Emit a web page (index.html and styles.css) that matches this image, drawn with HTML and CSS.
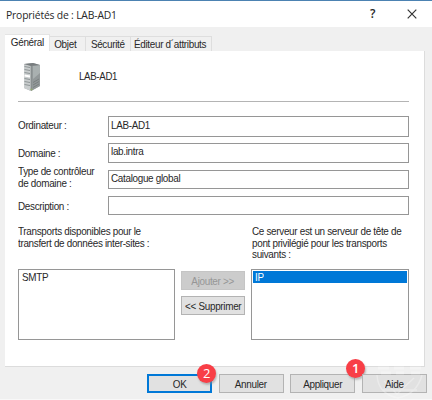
FILE: index.html
```html
<!DOCTYPE html>
<html lang="fr">
<head>
<meta charset="utf-8">
<title>Propriétés de : LAB-AD1</title>
<link rel="stylesheet" href="styles.css">
</head>
<body>
<main class="dialog">
  <header class="titlebar">
    <h1 class="title"><span class="t">Propriétés de : LAB-AD1</span></h1>
    <span class="help">?</span>
    <svg class="close" width="10" height="10" viewBox="0 0 10 10"><path d="M.7.7 9.3 9.3M9.3.7.7 9.3" stroke="#333" stroke-width="1.2" fill="none"/></svg>
  </header>
  <nav class="tabs">
    <span class="tab active t-general"><span class="t">Général</span></span>
    <span class="tab t-objet"><span class="t">Objet</span></span>
    <span class="tab t-secu"><span class="t">Sécurité</span></span>
    <span class="tab t-edit"><span class="t">Éditeur d´attributs</span></span>
  </nav>
  <section class="panel">
    <div class="identity">
      <svg class="server" width="18" height="29" viewBox="0 0 18 29">
        <path d="M1 1 10 0 17 2V23L8 28 1 25Z" fill="#a9adae"/>
        <path d="M8 3 17 2V23L8 28Z" fill="#929899"/>
        <path d="M10 3 17 2V10L10 16Z" fill="#a9b0b0"/>
        <path d="M1 1 8 3V28L1 25Z" fill="#c9cdce"/>
        <path d="M1 1 10 0 17 2 8 3Z" fill="#777c7e"/>
        <path d="M1.500 3.500 7 4.500M1.500 6.500 7 7.500M1.500 9.500 7 10.500M1.500 15.500 7 16.500M1.500 18.500 7 19.500M1.500 21.500 7 22.500" stroke="#7f8788" stroke-width=".8"/>
        <path d="M1.500 12.500 7 13.500" stroke="#fff" stroke-width="2"/>
        <path d="M8 3V27" stroke="#777d7e" stroke-width=".6"/>
        <path d="M10 19.500 16 16M10 22 16 18.500M10 24.500 16 21" stroke="#737a7a" stroke-width=".8"/>
        <circle cx="8.500" cy="26.500" r="1" fill="#91a96d"/>
      </svg>
      <span class="name"><span class="t caps">LAB-AD1</span></span>
    </div>
    <div class="fields">
      <label class="l1"><span class="t">Ordinateur :</span></label><div class="field f1"><span class="t">LAB-AD1</span></div>
      <label class="l2"><span class="t">Domaine :</span></label><div class="field f2"><span class="t">lab.intra</span></div>
      <label class="l3"><span class="t">Type de contrôleur<br>de domaine :</span></label><div class="field f3"><span class="t">Catalogue global</span></div>
      <label class="l4"><span class="t">Description :</span></label><div class="field f4"></div>
    </div>
    <div class="transports">
      <p class="caption"><span class="t">Transports disponibles pour le<br>transfert de données inter-sites :</span></p>
      <p class="caption right"><span class="t">Ce serveur est un serveur de tête de<br>pont privilégié pour les transports<br>suivants :</span></p>
      <div class="list"><div class="item"><span class="t">SMTP</span></div></div>
      <div class="moves">
        <span class="button disabled"><span class="t">Ajouter &gt;&gt;</span></span>
        <span class="button"><span class="t">&lt;&lt; Supprimer</span></span>
      </div>
      <div class="list"><div class="item selected"><span class="t">IP</span></div></div>
    </div>
  </section>
  <footer class="actions">
    <span class="button default"><span class="t">OK</span><b class="badge two-b">2</b></span>
    <span class="button"><span class="t">Annuler</span></span>
    <span class="button"><span class="t">Appliquer</span><b class="badge one-b">1</b></span>
    <span class="button"><span class="t">Aide</span></span>
  </footer>
  <svg class="mark" width="54" height="36" viewBox="0 0 54 36" fill="none" stroke="#fff" opacity=".3"><path d="M4 3H15M20 3H30M36 3H47M7 8H17M22 8H30M37 8H46" stroke-width="3"/><path d="M3 10Q4 29 24 33Q43 29 48 10M10 16 23 29 40 13M9 25H43" stroke-width="1.500"/></svg>
</main>
</body>
</html>
```
FILE: styles.css
```css
* { box-sizing: border-box; }
body { margin: 0; }
.dialog {
  position: relative;
  width: 432px;
  height: 400px;
  overflow: hidden;
  background: #f0f0f0;
  border-top: 1px solid #4c82b2;
  border-bottom: 1px solid #f8f8f8;
  font: 11px/12px "Liberation Sans", sans-serif;
  letter-spacing: -.35px;
  color: #282828;
  white-space: nowrap;
}
/* Condensed dialog lettering */
.t { display: inline-block; transform: scaleX(.9); transform-origin: 0 50%; }
.tab .t, .button .t { transform-origin: 50% 50%; }
.titlebar {
  display: flex;
  align-items: center;
  height: 26px;
  padding: 0 15px 0 6px;
  background: #fff;
}
.title {
  flex: 1;
  margin: 2px 0 0;
  font: 11.5px/14px "Open Sans", sans-serif;
  letter-spacing: -.2px;
}
.help { font: 600 12px/14px "Open Sans", sans-serif; margin-right: 32px; }
.tabs { display: flex; align-items: flex-end; height: 24px; padding-left: 5px; }
.tab {
  display: flex;
  justify-content: center;
  height: 15px;
  padding-top: 1px;
  border: 1px solid #dedede;
  border-width: 1px 1px 0 0;
}
.active { height: 17px; background: #fff; border-color: #e4e4e4; }
.t-general { width: 45px; }
.t-objet { width: 36px; padding-right: 5px; }
.t-secu { width: 45px; }
.t-edit { width: 81px; padding-right: 2px; }
.panel {
  width: 420px;
  height: 316px;
  margin-left: 5px;
  padding: 0 15px 0 13px;
  background: #fff;
  border: 1px solid #dcdcdc;
  border-width: 0 1px 1px 0;
}
.identity {
  display: flex;
  gap: 38px;
  height: 51px;
  padding: 12px 0 0 5px;
  border-bottom: 1px solid #b4b4b4;
}
.name { padding-top: 7px; }
.caps { transform: scaleX(.88); }
.fields {
  display: grid;
  grid-template-columns: 90px 301px;
  grid-template-rows: 21px 20px 19px 19px;
  row-gap: 6px;
  margin-top: 14px;
}
.l1 { padding-top: 3px; }
.l2 { padding-top: 4px; }
.l3 { margin-top: -3px; line-height: 11.5px; }
.l4 { padding-top: 6px; }
.field { padding: 2px 0 0 2px; border: 1px solid #969696; }
.f2 { padding-top: 1px; }
.f3, .f4 { margin-top: 1px; margin-bottom: -1px; }
.f3 { padding-top: 1px; }
.f4 { margin-top: 2px; margin-bottom: -2px; }
.transports {
  display: grid;
  grid-template-columns: 158px 76px 158px;
  grid-template-rows: 43px 71px;
  margin-top: 13px;
}
.caption { margin: 0; line-height: 11.6px; }
.right { grid-column: 3; }
.list { margin-right: 1px; padding: 1px; border: 1px solid #969696; margin-left: -1px; }
.list:first-of-type { margin-left: 0; }
.item { height: 12px; padding-left: 2px; line-height: 12px; }
.selected { color: #fff; background: #0078d7; }
.moves { display: flex; flex-direction: column; gap: 6px; padding: 2px 7px 0 5px; }
.button {
  position: relative;
  display: flex;
  justify-content: center;
  height: 19px;
  line-height: 18px;
  background: #e1e1e1;
  border: 1px solid #b3b3b3;
}
.disabled { color: #969696; background: #ccc; border-color: #c5c5c5; }
.actions {
  display: grid;
  grid-template-columns: repeat(4, 65px);
  column-gap: 6.5px;
  padding: 7px 0 0 147px;
}
.default { border: 2px solid #0078d7; line-height: 16px; }
.badge {
  position: absolute;
  width: 19px;
  height: 19px;
  border-radius: 50%;
  background: #f83e46;
  color: #fff;
  font: 13px/19px "Open Sans", sans-serif;
  text-align: center;
  box-shadow: 1px 2px 2px #8888;
}
.two-b { left: 48px; top: -12px; }
.one-b { left: 55px; top: -16px; font-weight: 600; }
.mark { position: absolute; left: 374px; top: 364px; }
```
